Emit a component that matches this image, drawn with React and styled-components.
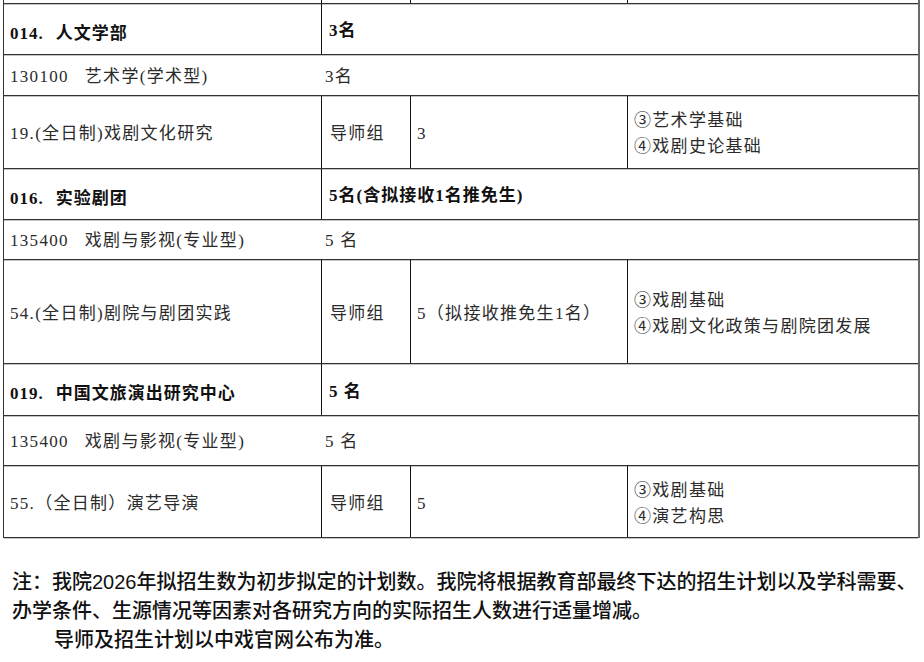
import React from 'react';
import styled, { createGlobalStyle } from 'styled-components';

const COLS = '318px 89px 217px 1fr';

const GlobalStyle = createGlobalStyle`
  html, body {
    margin: 0;
    padding: 0;
    background: #fff;
  }
  body {
    font-family: "Liberation Serif", "Noto Sans CJK SC", serif;
    color: #222;
  }
`;

const Page = styled.div`
  width: 924px;
  height: 662px;
  overflow: hidden;
  background: #fff;
`;

const Table = styled.div`
  display: flex;
  flex-direction: column;
  width: 917px;
  margin-left: 3px;
  border-left: 1px solid #333;
  border-right: 2px solid #6a6a6a;
  box-sizing: border-box;
`;

const Row = styled.div`
  display: grid;
  grid-template-columns: ${({ $cols }) => $cols};
  height: ${({ $h }) => $h}px;
  box-sizing: border-box;
  border-bottom: 1px solid #333;
  box-shadow: 0 1px 0 #c4c4c4;
`;

const Cell = styled.div`
  display: flex;
  flex-direction: column;
  justify-content: center;
  box-sizing: border-box;
  padding-left: ${({ $pl }) => $pl || 6}px;
  padding-top: ${({ $pt }) => $pt || 0}px;
  border-right: ${({ $divider }) => ($divider ? '1px solid #111' : 'none')};
  font-size: 17px;
  letter-spacing: ${({ $bold }) => ($bold ? '1px' : '1.3px')};
  font-weight: ${({ $bold }) => ($bold ? 700 : 400)};
  color: ${({ $bold }) => ($bold ? '#111' : '#2b2b2b')};
  white-space: nowrap;
  line-height: 26px;
`;

const Code = styled.span`
  margin-right: ${({ $gap }) => $gap}px;
`;

const Note = styled.div`
  margin-top: 30px;
  padding-left: 12px;
  font-family: "Liberation Sans", "Noto Sans CJK SC", sans-serif;
  font-size: 20px;
  font-weight: 500;
  line-height: 29px;
  color: #111;
  white-space: nowrap;
`;

const NoteLine = styled.div`
  text-indent: ${({ $indent }) => ($indent ? '42px' : '0')};
`;

const sections = [
  {
    num: '014.',
    name: '人文学部',
    quota: '3名',
    h: [51, 41, 73],
    code: '130100',
    major: '艺术学(学术型)',
    majorQuota: '3名',
    dir: '19.(全日制)戏剧文化研究',
    count: '3',
    exams: ['③艺术学基础', '④戏剧史论基础'],
  },
  {
    num: '016.',
    name: '实验剧团',
    quota: '5名(含拟接收1名推免生)',
    h: [51, 40, 104],
    code: '135400',
    major: '戏剧与影视(专业型)',
    majorQuota: '5 名',
    dir: '54.(全日制)剧院与剧团实践',
    count: '5（拟接收推免生1名）',
    exams: ['③戏剧基础', '④戏剧文化政策与剧院团发展'],
  },
  {
    num: '019.',
    name: '中国文旅演出研究中心',
    quota: '5 名',
    h: [52, 50, 72],
    code: '135400',
    major: '戏剧与影视(专业型)',
    majorQuota: '5 名',
    dir: '55.（全日制）演艺导演',
    count: '5',
    exams: ['③戏剧基础', '④演艺构思'],
  },
];

const App = () => {
  return (
    <Page>
      <GlobalStyle />
      <Table>
        <Row $cols={COLS} $h={4}>
          <Cell $divider />
          <Cell $divider />
          <Cell $divider />
          <Cell />
        </Row>
        {sections.map(s => (
          <React.Fragment key={s.num}>
            <Row $cols="318px 1fr" $h={s.h[0]}>
              <Cell $divider $bold $pl={6} $pt={9}>
                <span>
                  <Code $gap={12}>{s.num}</Code>
                  {s.name}
                </span>
              </Cell>
              <Cell $bold $pl={7} $pt={4}>
                {s.quota}
              </Cell>
            </Row>
            <Row $cols="318px 1fr" $h={s.h[1]}>
              <Cell $pl={6} $pt={3}>
                <span>
                  <Code $gap={16}>{s.code}</Code>
                  {s.major}
                </span>
              </Cell>
              <Cell $pl={3} $pt={3}>
                {s.majorQuota}
              </Cell>
            </Row>
            <Row $cols={COLS} $h={s.h[2]}>
              <Cell $divider $pl={6} $pt={4}>
                {s.dir}
              </Cell>
              <Cell $divider $pl={8} $pt={4}>
                导师组
              </Cell>
              <Cell $divider $pl={6} $pt={4}>
                {s.count}
              </Cell>
              <Cell $pl={6} $pt={4}>
                {s.exams.map(e => (
                  <div key={e}>{e}</div>
                ))}
              </Cell>
            </Row>
          </React.Fragment>
        ))}
      </Table>
      <Note>
        <NoteLine>
          注：我院2026年拟招生数为初步拟定的计划数。我院将根据教育部最终下达的招生计划以及学科需要、
        </NoteLine>
        <NoteLine>办学条件、生源情况等因素对各研究方向的实际招生人数进行适量增减。</NoteLine>
        <NoteLine $indent>导师及招生计划以中戏官网公布为准。</NoteLine>
      </Note>
    </Page>
  );
};

export default App;
